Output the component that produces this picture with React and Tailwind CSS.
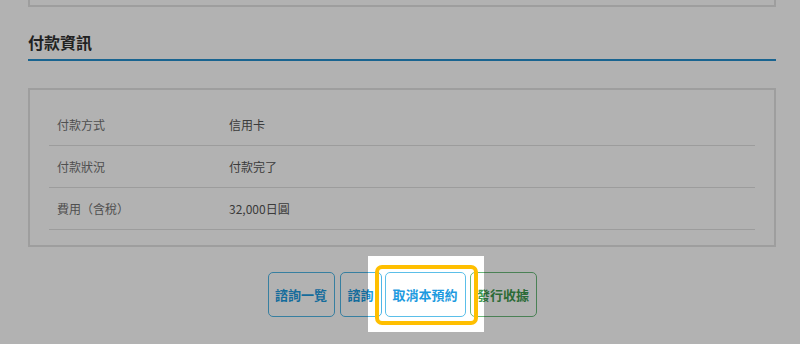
import React from 'react';

const rows = [
    { label: '付款方式', value: '信用卡' },
    { label: '付款狀況', value: '付款完了' },
    { label: '費用（含稅）', value: '32,000日圓' },
];

const App = () => {
    return (
        <div
            className="relative w-[800px] h-[344px] overflow-hidden bg-white"
            style={{ fontFamily: '"Noto Sans CJK TC", "Noto Sans", sans-serif' }}
        >
            <div className="pl-[28px] pr-[24px]">
                {/* bottom edge of the previous card */}
                <div className="h-[7px] border-x-2 border-b-2 border-[#e3e3e3]" />

                {/* Section heading */}
                <div className="mt-[23px] pb-[5px] border-b-2 border-[#2590cf]">
                    <h2 className="text-[16px] leading-[24px] font-bold text-[#303030]">付款資訊</h2>
                </div>

                {/* Payment table */}
                <div className="mt-[27px] border-2 border-[#e3e3e3] px-[19px] pt-[14px] pb-[15px]">
                    {rows.map((r) => (
                        <div key={r.label} className="flex items-center h-[42px] border-b border-[#e0e0e0] pl-[8px] text-[12px]">
                            <div className="w-[172px] text-[#727272]">{r.label}</div>
                            <div className="text-[#555555]">{r.value}</div>
                        </div>
                    ))}
                </div>

                {/* Action buttons */}
                <div className="mt-[25px] flex justify-center text-[13px] font-bold">
                    <button className="w-[67px] h-[45px] rounded-[5px] border border-[#4fb6e6] text-[#1e9be0] bg-white">諮詢一覧</button>
                    <button className="ml-[5px] w-[42px] h-[45px] rounded-[5px] border border-[#4fb6e6] text-[#1e9be0] bg-white">諮詢</button>
                    <div className="relative ml-[3px]">
                        <button className="w-[81px] h-[45px] rounded-[5px] border border-[#5bbfe9] text-[#1e9be0] bg-white">取消本預約</button>
                        {/* tour spotlight */}
                        <div className="absolute z-10 -left-[17px] -top-[16px] -right-[18px] -bottom-[15px] shadow-[0_0_0_2000px_rgba(0,0,0,0.3)] pointer-events-none" />
                        <div className="absolute z-20 -left-[10px] -top-[7px] -right-[12px] -bottom-[8px] border-4 border-[#ffbf00] rounded-[7px] pointer-events-none" />
                    </div>
                    <button className="ml-[4px] w-[67px] h-[45px] rounded-[5px] border border-[#6ab97a] text-[#3f9a50] bg-white">發行收據</button>
                </div>
            </div>
        </div>
    );
};

export default App;
